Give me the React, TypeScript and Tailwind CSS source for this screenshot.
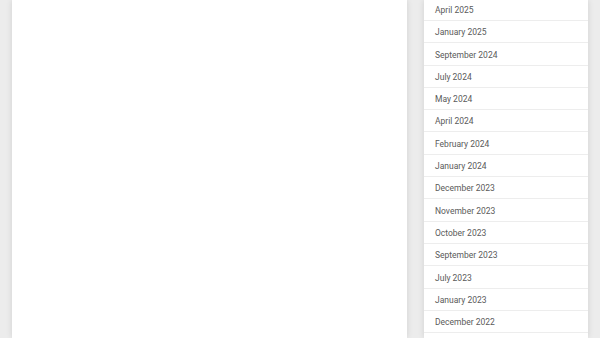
import React from "react";

const items = [
  "April 2025",
  "January 2025",
  "September 2024",
  "July 2024",
  "May 2024",
  "April 2024",
  "February 2024",
  "January 2024",
  "December 2023",
  "November 2023",
  "October 2023",
  "September 2023",
  "July 2023",
  "January 2023",
  "December 2022",
];

export default function App() {
  return (
    <div
      className="w-[600px] h-[338px] overflow-hidden bg-[#ececec] flex gap-[17px] pl-[12px]"
      style={{ fontFamily: "Roboto, 'Liberation Sans', sans-serif" }}
    >
      <div className="w-[395px] h-full bg-white shadow-[0_0_6px_rgba(0,0,0,0.12)]" />
      <div className="w-[164px] h-full bg-white shadow-[0_0_6px_rgba(0,0,0,0.12)] overflow-hidden">
        <ul className="-mt-[1.3px]">
          {items.map((t) => (
            <li
              key={t}
              className="h-[22.3px] border-b border-[#ededed] flex items-center pl-[11px] pt-[2px] text-[8.5px] text-[#5a5a5a]"
            >
              {t}
            </li>
          ))}
        </ul>
      </div>
    </div>
  );
}
